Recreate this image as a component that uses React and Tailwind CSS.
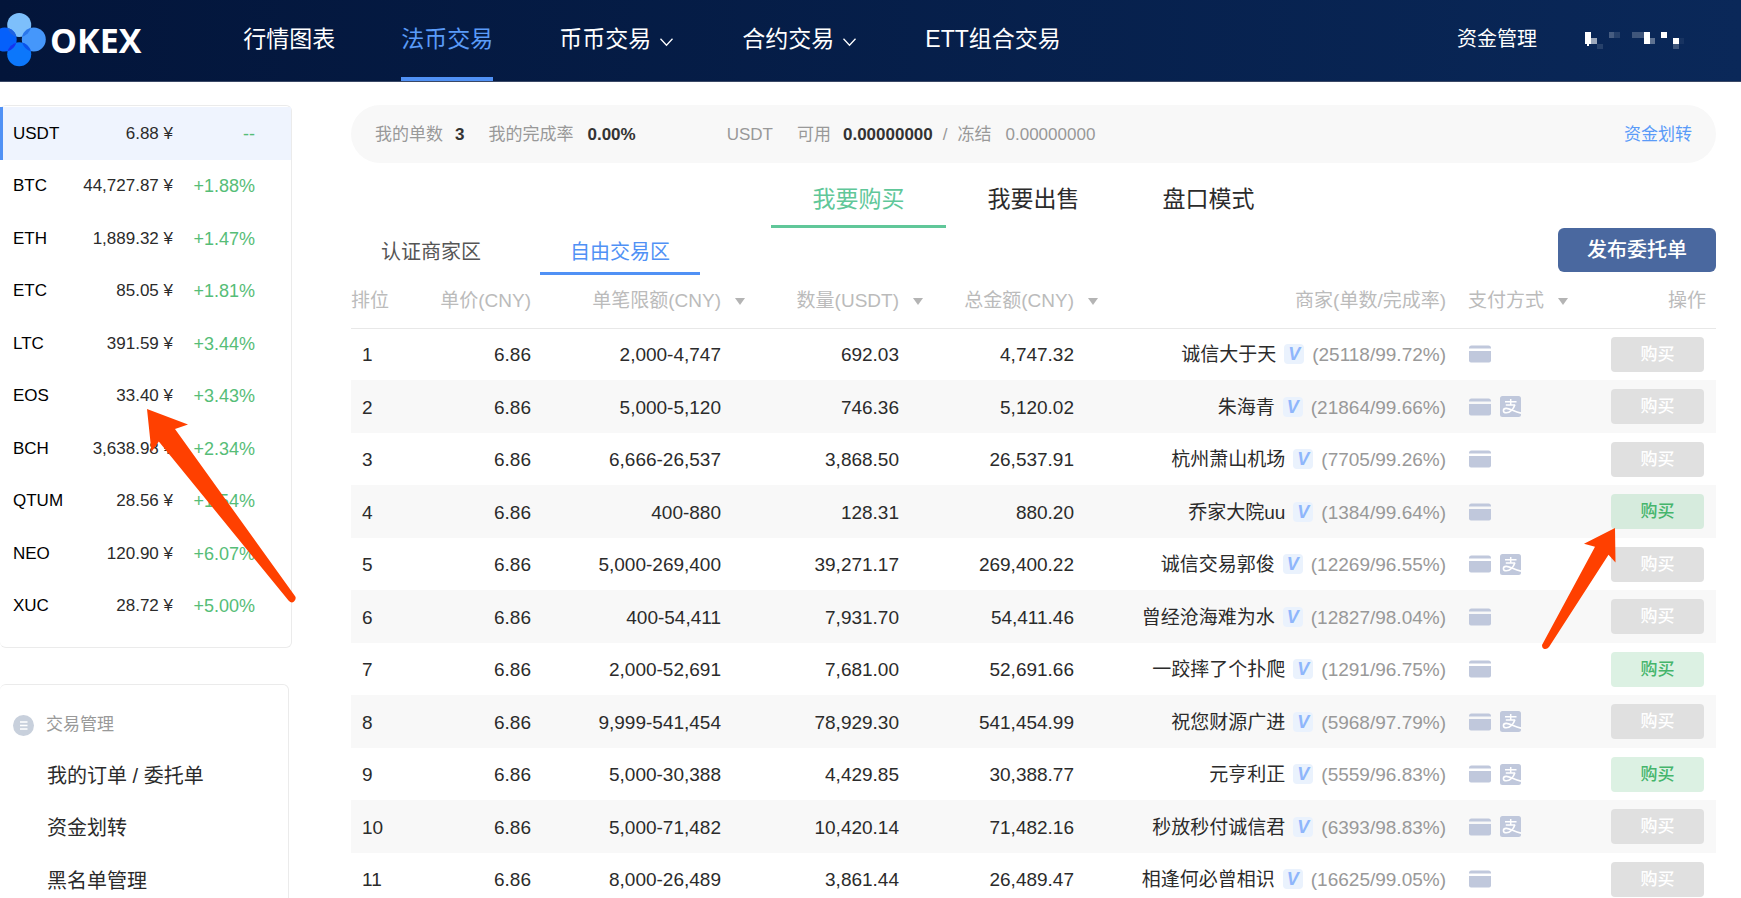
const navItems = [
  { label: '行情图表' },
  { label: '法币交易', active: true },
  { label: '币币交易', dropdown: true },
  { label: '合约交易', dropdown: true },
  { label: 'ETT组合交易' },
];

const coins = [
  { name: 'USDT', price: '6.88', change: '--', active: true },
  { name: 'BTC', price: '44,727.87', change: '+1.88%' },
  { name: 'ETH', price: '1,889.32', change: '+1.47%' },
  { name: 'ETC', price: '85.05', change: '+1.81%' },
  { name: 'LTC', price: '391.59', change: '+3.44%' },
  { name: 'EOS', price: '33.40', change: '+3.43%' },
  { name: 'BCH', price: '3,638.98', change: '+2.34%' },
  { name: 'QTUM', price: '28.56', change: '+1.54%' },
  { name: 'NEO', price: '120.90', change: '+6.07%' },
  { name: 'XUC', price: '28.72', change: '+5.00%' },
];

const manageLinks = ['我的订单 / 委托单', '资金划转', '黑名单管理'];

const orders = [
  { limit: '2,000-4,747', amount: '692.03', total: '4,747.32', seller: '诚信大于天', stats: '25118/99.72%' },
  { limit: '5,000-5,120', amount: '746.36', total: '5,120.02', seller: '朱海青', stats: '21864/99.66%', alipay: true },
  { limit: '6,666-26,537', amount: '3,868.50', total: '26,537.91', seller: '杭州萧山机场', stats: '7705/99.26%' },
  { limit: '400-880', amount: '128.31', total: '880.20', seller: '乔家大院uu', stats: '1384/99.64%', open: true },
  { limit: '5,000-269,400', amount: '39,271.17', total: '269,400.22', seller: '诚信交易郭俊', stats: '12269/96.55%', alipay: true },
  { limit: '400-54,411', amount: '7,931.70', total: '54,411.46', seller: '曾经沧海难为水', stats: '12827/98.04%' },
  { limit: '2,000-52,691', amount: '7,681.00', total: '52,691.66', seller: '一跤摔了个扑爬', stats: '1291/96.75%', open: true },
  { limit: '9,999-541,454', amount: '78,929.30', total: '541,454.99', seller: '祝您财源广进', stats: '5968/97.79%', alipay: true },
  { limit: '5,000-30,388', amount: '4,429.85', total: '30,388.77', seller: '元亨利正', stats: '5559/96.83%', alipay: true, open: true },
  { limit: '5,000-71,482', amount: '10,420.14', total: '71,482.16', seller: '秒放秒付诚信君', stats: '6393/98.83%', alipay: true },
  { limit: '8,000-26,489', amount: '3,861.44', total: '26,489.47', seller: '相逢何必曾相识', stats: '16625/99.05%' },
];

const Logo = () => (
  <a href="#" className="flex items-center pb-[2px]">
    <svg className="w-[46px] h-[54px]" viewBox="0 0 46 54" aria-hidden="true">
      <clipPath id="leftPetal">
        <circle cx="4.700" cy="26.600" r="12" />
      </clipPath>
      <clipPath id="rightPetal">
        <circle cx="33.800" cy="26.600" r="12" />
      </clipPath>
      <circle cx="19.200" cy="12" r="12" fill="#7dbffb" />
      <circle cx="4.700" cy="26.600" r="12" fill="#0560fb" />
      <circle cx="33.800" cy="26.600" r="12" fill="#4597fb" />
      <circle cx="19.200" cy="41.200" r="12" fill="#0c77fb" />
      <circle cx="19.200" cy="12" r="12" fill="#1f62e0" clipPath="url(#leftPetal)" />
      <circle cx="19.200" cy="12" r="12" fill="#2b76ea" clipPath="url(#rightPetal)" />
      <circle cx="19.200" cy="41.200" r="12" fill="#1433ee" clipPath="url(#leftPetal)" />
      <circle cx="19.200" cy="41.200" r="12" fill="#0b52ea" clipPath="url(#rightPetal)" />
    </svg>
    <span className="ml-1 font-['Open_Sans',sans-serif] text-[34px] leading-none font-bold">OKEX</span>
  </a>
);

const ChevronDown = () => (
  <svg className="w-[17px] h-4 ml-2 mt-1" viewBox="0 0 17 16" fill="none" stroke="currentColor" strokeWidth="1.3" aria-hidden="true">
    <path d="M1.500 4.800 7.500 11.200 13.500 4.800" />
  </svg>
);

// pixelated account name
const MaskedAccount = () => (
  <svg className="w-[102px] h-5" viewBox="0 0 102 20" fill="#fff" aria-hidden="true">
    <rect x="0" y="1" width="6" height="12" />
    <rect x="6" y="7" width="6" height="6" opacity=".6" />
    <rect x="2" y="13" width="2" height="2" />
    <rect x="12" y="13" width="6" height="5" opacity=".12" />
    <rect x="24" y="1" width="5" height="6" opacity=".25" />
    <rect x="29" y="1" width="6" height="6" opacity=".12" />
    <rect x="47" y="1" width="12" height="6" opacity=".22" />
    <rect x="59" y="1" width="6" height="12" />
    <rect x="65" y="7" width="5" height="6" opacity=".35" />
    <rect x="76" y="1" width="6" height="6" />
    <rect x="88" y="7" width="6" height="6" />
    <rect x="94" y="7" width="5" height="6" opacity=".06" />
    <rect x="88" y="13" width="6" height="5" opacity=".22" />
  </svg>
);

const Header = () => (
  <header className="flex items-center h-[82px] border-b border-[#3a4866] bg-linear-to-r from-[#03153a] to-[#0a2859] text-white">
    <Logo />
    <nav className="flex self-stretch gap-[66px] ml-[102px] text-[23px]">
      {navItems.map((item) => (
        <a
          key={item.label}
          href="#"
          className={`flex items-center border-y-4 border-t-transparent pb-[2px] ${
            item.active ? 'border-b-[#5091f5] text-[#5a9bf8]' : 'border-b-transparent'
          }`}
        >
          {item.label}
          {item.dropdown && <ChevronDown />}
        </a>
      ))}
    </nav>
    <div className="flex items-center gap-12 ml-auto pr-[54px] text-xl">
      <a href="#" className="pb-1">资金管理</a>
      <MaskedAccount />
    </div>
  </header>
);

const CoinList = () => (
  <ul className="w-[292px] pt-px pb-[15px] border border-l-0 border-[#ebebeb] rounded-md text-[17px]">
    {coins.map((coin) => (
      <li key={coin.name} className="odd:h-[53px] even:h-[52px]">
        <a
          href="#"
          className={`flex items-center h-full pr-9 border-l-[3px] ${
            coin.active ? 'bg-[#eff4fe] border-[#5091f5]' : 'border-transparent'
          }`}
        >
          <span className="w-[60px] pl-[10px] text-black">{coin.name}</span>
          <span className="flex-1 text-right">{coin.price} ¥</span>
          <span className="w-[82px] text-right text-lg text-[#56bd77]">{coin.change}</span>
        </a>
      </li>
    ))}
  </ul>
);

const ManagePanel = () => (
  <section className="w-[289px] min-h-[260px] mt-9 pt-[22px] border border-l-0 border-[#ebebeb] rounded-md">
    <h2 className="flex items-center h-9 pl-[13px] text-[17px] text-[#999]">
      <svg className="w-[21px] h-[21px] mr-3" viewBox="0 0 21 21" aria-hidden="true">
        <circle cx="10.5" cy="10.5" r="10.5" fill="#c8d0dc" />
        <path d="M7 7h7.500M7 10.500h7.500M7 14h7.500" stroke="#fff" strokeWidth="1.500" />
      </svg>
      交易管理
    </h2>
    <ul className="mt-[6px] pl-[47px] text-xl">
      {manageLinks.map((label) => (
        <li key={label} className="flex items-center odd:h-[53px] even:h-[52px]">
          <a href="#">{label}</a>
        </li>
      ))}
    </ul>
  </section>
);

const AccountBar = () => (
  <div className="flex items-center h-[58px] px-6 pt-[2px] rounded-full bg-[#f8f8f8] text-[17px] text-[#999]">
    <span>我的单数</span>
    <b className="ml-3 text-[#333]">3</b>
    <span className="ml-6">我的完成率</span>
    <b className="ml-[14px] text-[#333]">0.00%</b>
    <span className="ml-[91px]">USDT</span>
    <span className="ml-6">可用</span>
    <b className="ml-3 text-[#333]">0.00000000</b>
    <span className="ml-[10px]">/</span>
    <span className="ml-[10px]">冻结</span>
    <span className="ml-[14px]">0.00000000</span>
    <a href="#" className="ml-auto text-[#5a9bf8]">资金划转</a>
  </div>
);

const ModeTabs = () => (
  <div className="flex justify-center text-[23px]">
    <button type="button" className="w-[175px] h-[65px] pt-[10px] border-b-[3px] border-[#60c799] text-[#60c799]">我要购买</button>
    <button type="button" className="w-[175px] h-[65px] pt-[10px] border-b-[3px] border-transparent">我要出售</button>
    <button type="button" className="w-[175px] h-[65px] pt-[10px] border-b-[3px] border-transparent">盘口模式</button>
  </div>
);

const ZoneTabs = () => (
  <div className="flex items-start justify-between text-xl">
    <div className="flex gap-[29px]">
      <button type="button" className="w-[160px] h-[47px] pt-1 border-b-[3px] border-transparent text-[#555]">认证商家区</button>
      <button type="button" className="w-[160px] h-[47px] pt-1 border-b-[3px] border-[#5091f5] text-[#5091f5]">自由交易区</button>
    </div>
    <button type="button" className="w-[158px] h-11 rounded-md bg-[#4a689f] font-medium text-white">发布委托单</button>
  </div>
);

const Caret = () => (
  <svg className="w-[10px] h-[7px] ml-[14px]" viewBox="0 0 10 7" fill="#b4b4b4" aria-hidden="true">
    <path d="M0 0h10L5 7z" />
  </svg>
);

const SortHeader = ({ label }) => (
  <th className="font-normal">
    <button type="button" className="flex items-center ml-auto">
      {label}
      <Caret />
    </button>
  </th>
);

const CardIcon = () => (
  <svg className="w-[22px] h-[18px]" viewBox="0 0 22 18" fill="#c0c8dc" aria-label="银行卡">
    <path d="M0 3.500V3a2.500 2.500 0 0 1 2.500-2.500h17A2.500 2.500 0 0 1 22 3v.5z" />
    <path d="M0 6h22v9.500a2 2 0 0 1-2 2H2a2 2 0 0 1-2-2z" />
  </svg>
);

const AlipayIcon = () => (
  <svg className="w-[21px] h-[21px]" viewBox="0 0 21 21" fill="none" stroke="#fff" aria-label="支付宝">
    <rect width="21" height="21" rx="2.500" fill="#c0c8dc" stroke="none" />
    <path d="M5 5.800h11.500M10.700 3v6M5.800 9h9.400" strokeWidth="1.500" />
    <path d="M14.800 9C13.500 13 10 16.800 6.300 16.800 2.600 16.800 2.500 12.600 6 12.400c3.500-.2 7 2.600 15 4.800" strokeWidth="1.600" />
  </svg>
);

const OrderRow = ({ order, rank }) => (
  <tr className="odd:h-[52px] even:h-[53px] even:bg-[#f8f8f8]">
    <td className="pt-[2px] pl-[11px]">{rank}</td>
    <td className="pt-[2px] text-right">6.86</td>
    <td className="pt-[2px] pr-6 text-right">{order.limit}</td>
    <td className="pt-[2px] pr-6 text-right">{order.amount}</td>
    <td className="pt-[2px] pr-6 text-right">{order.total}</td>
    <td>
      <div className="flex items-center justify-end gap-2">
        <span className="pt-[2px]">{order.seller}</span>
        <span className="flex items-center justify-center w-5 h-5 rounded-sm bg-[#eaf2fd] text-lg font-bold italic text-[#8fb6fb]">V</span>
        <span className="pt-[2px] text-[#999]">({order.stats})</span>
      </div>
    </td>
    <td className="pl-[23px]">
      <div className="flex items-center gap-[9px]">
        <CardIcon />
        {order.alipay && <AlipayIcon />}
      </div>
    </td>
    <td className="pr-3">
      <button
        type="button"
        disabled={!order.open}
        className={`block w-[93px] h-[35px] ml-auto pt-px rounded-sm text-[17px] font-medium ${
          order.open ? 'bg-[#3cb364]/18 text-[#45b56b]' : 'bg-[#e0e0e0] text-white'
        }`}
      >
        购买
      </button>
    </td>
  </tr>
);

const OrderTable = () => (
  <table className="w-full table-fixed text-[19px] leading-6">
    <colgroup>
      <col className="w-[60px]" />
      <col className="w-[120px]" />
      <col className="w-[214px]" />
      <col className="w-[178px]" />
      <col className="w-[175px]" />
      <col />
      <col className="w-[140px]" />
      <col className="w-[130px]" />
    </colgroup>
    <thead>
      <tr className="h-[53px] border-b border-[#e8e8e8] text-right text-[#bbb]">
        <th className="font-normal text-left">排位</th>
        <th className="font-normal">单价(CNY)</th>
        <SortHeader label="单笔限额(CNY)" />
        <SortHeader label="数量(USDT)" />
        <SortHeader label="总金额(CNY)" />
        <th className="font-normal">商家(单数/完成率)</th>
        <th className="pl-[22px] font-normal">
          <button type="button" className="flex items-center">
            支付方式
            <Caret />
          </button>
        </th>
        <th className="pr-[10px] font-normal">操作</th>
      </tr>
    </thead>
    <tbody>
      {orders.map((order, index) => (
        <OrderRow key={order.seller} order={order} rank={index + 1} />
      ))}
    </tbody>
  </table>
);

const App = () => {
  return (
    <div className="relative h-screen overflow-hidden bg-white font-['Liberation_Sans','Noto_Sans_CJK_SC',sans-serif] text-[#2b2b2b]">
      <Header />
      <div className="flex pt-[23px] pr-[25px]">
        <aside className="w-[351px] shrink-0">
          <CoinList />
          <ManagePanel />
        </aside>
        <main className="flex-1 min-w-0">
          <AccountBar />
          <ModeTabs />
          <ZoneTabs />
          <OrderTable />
        </main>
      </div>

      {/* pointer arrows on the EOS price and the first open offer */}
      <svg className="absolute left-[147px] top-[409px] w-[150px] h-[194px] pointer-events-none" viewBox="0 0 150 194" fill="#ff4000" aria-hidden="true">
        <path d="M0 0 41 15.500 28 20 148.300 187.500Q149.500 190 147 192.500T141.500 191.500L11.800 32.500 4.500 43z" />
      </svg>
      <svg className="absolute right-[125px] top-[528px] w-[75px] h-[122px] pointer-events-none" viewBox="0 0 75 122" fill="#ff4000" aria-hidden="true">
        <path d="M74 0 43 15.700 54 18.700 1 117Q1 120.500 3.500 121T8 119L67.500 26.700 74.500 34.500z" />
      </svg>
    </div>
  );
};

export default App;
